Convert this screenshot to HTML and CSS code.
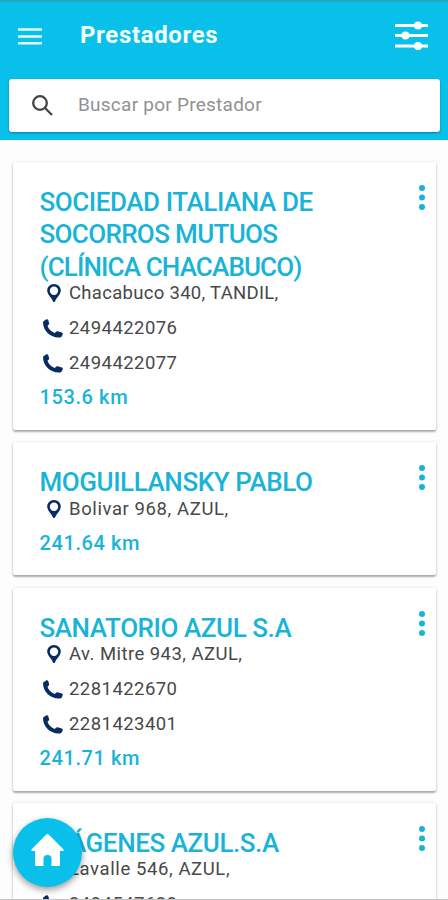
FILE: index.html
```html
<!DOCTYPE html>
<html lang="es">
<head>
    <meta charset="UTF-8">
    <meta name="viewport" content="width=device-width, initial-scale=1.0">
    <title>Prestadores</title>
    <link rel="stylesheet" href="styles.css">
</head>
<body>
    <!-- Shared icons -->
    <svg class="icon-defs" width="0" height="0">
        <symbol id="icon-pin" viewBox="0 0 14 18">
            <path fill-rule="evenodd" d="M7 0C3 0 .2 3 .2 6.6.2 10.600 4.500 13.500 6 17.400Q7 19 8 17.400C9.500 13.500 13.800 10.600 13.800 6.600 13.800 3 11 0 7 0ZM7 2.500A4.200 4.200 0 1 1 7 10.900 4.200 4.200 0 1 1 7 2.500Z"/>
        </symbol>
        <symbol id="icon-phone" viewBox="0 0 20 19">
            <path d="M.5 2.200 3.400.3Q4.600-.2 5.200 1L6.100 4Q6.300 5 5.500 5.700L4.500 6.700C5.300 9.600 8.200 12.500 11.800 13.900L13 12.700Q13.700 12 14.700 12.300L18.800 13.400Q20 13.900 19.800 15L19 17.100Q18.500 18.300 17 18.500C8.500 19.400.2 12.700 0 3.600Q0 2.700.5 2.200Z"/>
        </symbol>
        <symbol id="icon-more" viewBox="0 0 6 25">
            <circle cx="3" cy="3" r="3"/>
            <circle cx="3" cy="12.500" r="3"/>
            <circle cx="3" cy="22" r="3"/>
        </symbol>
    </svg>

    <header class="header">
        <div class="toolbar">
            <svg class="menu-icon" viewBox="0 0 24 17">
                <path d="M1 1.500H23M1 8.500H23M1 15.300H23"/>
            </svg>
            <h1>Prestadores</h1>
            <svg class="filter-icon" viewBox="0 0 33 29">
                <path d="M0 4.500H33M0 14.500H33M0 25H33"/>
                <circle cx="23" cy="4.500" r="4"/>
                <circle cx="10.500" cy="14.500" r="4"/>
                <circle cx="23" cy="25" r="4"/>
            </svg>
        </div>
        <div class="search-box">
            <svg class="search-icon" viewBox="0 0 21 21">
                <circle cx="8" cy="8" r="6.800"/>
                <path d="M12.800 12.800 20 20"/>
            </svg>
            <input type="text" class="search-input" placeholder="Buscar por Prestador">
        </div>
    </header>

    <main class="list">
        <div class="card">
            <h2>SOCIEDAD ITALIANA DE<br><span class="tight">SOCORROS MUTUOS</span><br><span class="tighter">(CLÍNICA CHACABUCO)</span></h2>
            <div class="row"><svg class="pin"><use href="#icon-pin"/></svg><span class="address-long">Chacabuco 340, TANDIL,</span></div>
            <div class="row phone-row"><svg class="phone"><use href="#icon-phone"/></svg><span>2494422076</span></div>
            <div class="row phone-row"><svg class="phone"><use href="#icon-phone"/></svg><span>2494422077</span></div>
            <div class="distance">153.6 km</div>
            <svg class="more"><use href="#icon-more"/></svg>
        </div>

        <div class="card">
            <h2>MOGUILLANSKY PABLO</h2>
            <div class="row"><svg class="pin"><use href="#icon-pin"/></svg><span class="address">Bolivar 968, AZUL,</span></div>
            <div class="distance">241.64 km</div>
            <svg class="more"><use href="#icon-more"/></svg>
        </div>

        <div class="card">
            <h2>SANATORIO AZUL S.A</h2>
            <div class="row"><svg class="pin"><use href="#icon-pin"/></svg><span>Av. Mitre 943, AZUL,</span></div>
            <div class="row phone-row"><svg class="phone"><use href="#icon-phone"/></svg><span>2281422670</span></div>
            <div class="row phone-row"><svg class="phone"><use href="#icon-phone"/></svg><span>2281423401</span></div>
            <div class="distance">241.71 km</div>
            <svg class="more"><use href="#icon-more"/></svg>
        </div>

        <div class="card">
            <h2>IMÁGENES AZUL.S.A</h2>
            <div class="row"><svg class="pin"><use href="#icon-pin"/></svg><span class="address">Lavalle 546, AZUL,</span></div>
            <div class="row phone-row"><svg class="phone"><use href="#icon-phone"/></svg><span>2494547628</span></div>
            <svg class="more"><use href="#icon-more"/></svg>
        </div>
    </main>

    <a class="home-button" href="#" aria-label="Inicio">
        <svg viewBox="0 0 33 32">
            <path d="M15 .8Q16.500-.6 18 .8L32.300 15.200Q33.500 17 31.500 17H29V30.500Q29 32 27.500 32H20.500V24.500Q20.500 21 16.500 21T12.500 24.500V32H5.500Q4 32 4 30.500V17H1.500Q-.5 17 .7 15.200Z"/>
        </svg>
    </a>
</body>
</html>
```
FILE: styles.css
```css
body {
    font-family: Roboto, "Liberation Sans", sans-serif;
    background-color: #fdfdfd;
    margin: 0;
    height: 900px;
    overflow: hidden;
    box-sizing: border-box;
    border-bottom: 1px solid #c4c4c4;
}

.icon-defs {
    position: absolute;
}

.header {
    background-color: #08c0ea;
    height: 140px;
    box-sizing: border-box;
    padding: 0 8px 0 9px;
    border-top: 2px solid #2aa3bd;
}

.toolbar {
    display: flex;
    align-items: center;
    height: 68px;
    padding: 0 12px 0 9px;
    margin-bottom: 9px;
}

.toolbar h1 {
    margin: 0 auto 3px 38px;
    color: #f4fdff;
    font-size: 24px;
    font-weight: 700;
    letter-spacing: 0.65px;
    line-height: 30px;
}

.menu-icon {
    width: 24px;
    height: 17px;
    stroke: #e8fbff;
    stroke-width: 2.6;
    stroke-linecap: round;
}

.filter-icon {
    width: 33px;
    height: 29px;
    margin-bottom: 1px;
    stroke: #ffffff;
    stroke-width: 2.8;
    fill: #ffffff;
}

.filter-icon circle {
    stroke: none;
}

.search-box {
    display: flex;
    align-items: center;
    height: 53px;
    box-sizing: border-box;
    padding: 0 22px;
    background-color: #ffffff;
    border-radius: 3px;
    box-shadow: 0 1px 2px rgba(0, 60, 80, 0.5);
}

.search-icon {
    width: 21px;
    height: 21px;
    margin-left: 1px;
    fill: none;
    stroke: #444444;
    stroke-width: 2.3;
}

.search-input {
    flex: 1;
    min-width: 0;
    height: 30px;
    margin: 0 0 3px 25px;
    padding: 0;
    border: none;
    outline: none;
    background: none;
    font-family: inherit;
    font-size: 19px;
    letter-spacing: 0.25px;
}

.search-input::placeholder {
    color: #919191;
}

.list {
    display: flex;
    flex-direction: column;
    gap: 12.5px;
    padding: 22px 12px 0 13px;
}

.card {
    position: relative;
    flex: none;
    padding: 24px 27px 22.5px 26.5px;
    background-color: #ffffff;
    border-radius: 2px;
    box-shadow: 0 2px 2px rgba(0, 0, 0, 0.3), 0 0 3px rgba(0, 0, 0, 0.12);
}

.card h2 {
    margin: 0;
    color: #18b4d8;
    font-size: 26px;
    font-weight: 500;
    line-height: 32.4px;
    letter-spacing: -0.43px;
    white-space: nowrap;
}

.card .tight {
    letter-spacing: -0.65px;
}

.card .tighter {
    letter-spacing: -0.85px;
}

.row {
    display: flex;
    align-items: center;
    height: 20px;
    margin-bottom: 15px;
    padding-left: 7.5px;
    color: #484848;
    font-size: 18.5px;
    letter-spacing: 0.45px;
    white-space: nowrap;
}

.address {
    letter-spacing: 0.6px;
}

.address-long {
    letter-spacing: 0.3px;
}

.phone-row {
    padding-left: 3.5px;
}

.pin {
    width: 14px;
    height: 18px;
    margin-right: 8px;
    fill: #0a2b62;
}

.phone {
    width: 20px;
    height: 19px;
    margin-right: 6px;
    fill: #0a2b62;
}

.distance {
    height: 20px;
    margin-top: -1px;
    color: #18b4d8;
    font-size: 20px;
    font-weight: 500;
    line-height: 20px;
    letter-spacing: 0.6px;
}

.more {
    position: absolute;
    top: 23px;
    right: 11.5px;
    width: 6px;
    height: 25px;
    fill: #18b4d8;
}

.home-button {
    position: absolute;
    left: 13px;
    top: 818px;
    width: 69px;
    height: 69px;
    display: flex;
    align-items: center;
    justify-content: center;
    padding-bottom: 5px;
    box-sizing: border-box;
    border-radius: 50%;
    background-color: #08c0ea;
    box-shadow: 0 3px 7px rgba(0, 0, 0, 0.4);
}

.home-button svg {
    width: 33px;
    height: 32px;
    fill: #ffffff;
}
```
